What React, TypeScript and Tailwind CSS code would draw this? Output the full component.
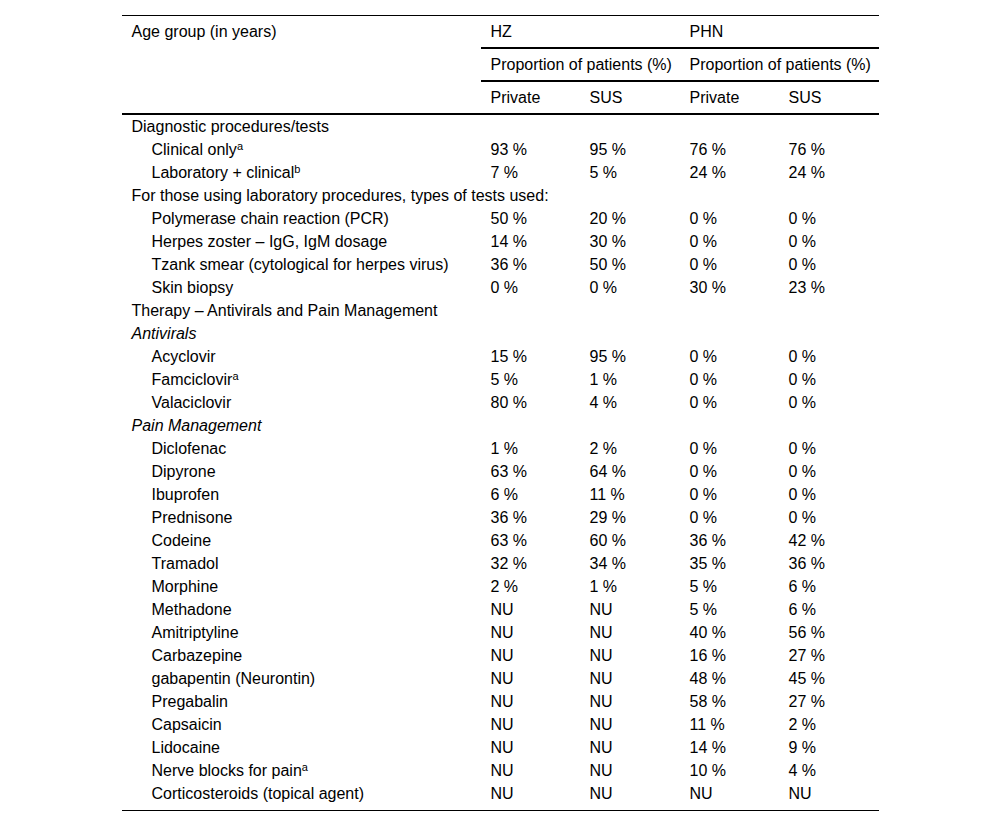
type Row = {
  label: string;
  sup?: string;
  kind: 'section' | 'italic' | 'item';
  values?: string[];
};

const rows: Row[] = [
  { label: 'Diagnostic procedures/tests', kind: 'section' },
  { label: 'Clinical only', sup: 'a', kind: 'item', values: ['93 %', '95 %', '76 %', '76 %'] },
  { label: 'Laboratory + clinical', sup: 'b', kind: 'item', values: ['7 %', '5 %', '24 %', '24 %'] },
  { label: 'For those using laboratory procedures, types of tests used:', kind: 'section' },
  { label: 'Polymerase chain reaction (PCR)', kind: 'item', values: ['50 %', '20 %', '0 %', '0 %'] },
  { label: 'Herpes zoster – IgG, IgM dosage', kind: 'item', values: ['14 %', '30 %', '0 %', '0 %'] },
  { label: 'Tzank smear (cytological for herpes virus)', kind: 'item', values: ['36 %', '50 %', '0 %', '0 %'] },
  { label: 'Skin biopsy', kind: 'item', values: ['0 %', '0 %', '30 %', '23 %'] },
  { label: 'Therapy – Antivirals and Pain Management', kind: 'section' },
  { label: 'Antivirals', kind: 'italic' },
  { label: 'Acyclovir', kind: 'item', values: ['15 %', '95 %', '0 %', '0 %'] },
  { label: 'Famciclovir', sup: 'a', kind: 'item', values: ['5 %', '1 %', '0 %', '0 %'] },
  { label: 'Valaciclovir', kind: 'item', values: ['80 %', '4 %', '0 %', '0 %'] },
  { label: 'Pain Management', kind: 'italic' },
  { label: 'Diclofenac', kind: 'item', values: ['1 %', '2 %', '0 %', '0 %'] },
  { label: 'Dipyrone', kind: 'item', values: ['63 %', '64 %', '0 %', '0 %'] },
  { label: 'Ibuprofen', kind: 'item', values: ['6 %', '11 %', '0 %', '0 %'] },
  { label: 'Prednisone', kind: 'item', values: ['36 %', '29 %', '0 %', '0 %'] },
  { label: 'Codeine', kind: 'item', values: ['63 %', '60 %', '36 %', '42 %'] },
  { label: 'Tramadol', kind: 'item', values: ['32 %', '34 %', '35 %', '36 %'] },
  { label: 'Morphine', kind: 'item', values: ['2 %', '1 %', '5 %', '6 %'] },
  { label: 'Methadone', kind: 'item', values: ['NU', 'NU', '5 %', '6 %'] },
  { label: 'Amitriptyline', kind: 'item', values: ['NU', 'NU', '40 %', '56 %'] },
  { label: 'Carbazepine', kind: 'item', values: ['NU', 'NU', '16 %', '27 %'] },
  { label: 'gabapentin (Neurontin)', kind: 'item', values: ['NU', 'NU', '48 %', '45 %'] },
  { label: 'Pregabalin', kind: 'item', values: ['NU', 'NU', '58 %', '27 %'] },
  { label: 'Capsaicin', kind: 'item', values: ['NU', 'NU', '11 %', '2 %'] },
  { label: 'Lidocaine', kind: 'item', values: ['NU', 'NU', '14 %', '9 %'] },
  { label: 'Nerve blocks for pain', sup: 'a', kind: 'item', values: ['NU', 'NU', '10 %', '4 %'] },
  { label: 'Corticosteroids (topical agent)', kind: 'item', values: ['NU', 'NU', 'NU', 'NU'] },
];

const grid = 'grid grid-cols-[359px_99px_100px_99px_100px]';

export default function App() {
  return (
    <div
      className="min-h-[826px] bg-white pt-[15px] text-[16px] text-black"
      style={{ fontFamily: '"Liberation Sans", Arial, sans-serif' }}
    >
      <div className="mx-auto w-[757px] border-t border-black border-b pb-[5px]">
        {/* header */}
        <div className={`${grid} border-b-2 border-black`}>
          <div className="row-span-3 pl-[10px] leading-[31px]">Age group (in years)</div>
          <div className="col-span-2 border-b-2 border-black pl-[10px] leading-[31px]">HZ</div>
          <div className="col-span-2 border-b-2 border-black pl-[10px] leading-[31px]">PHN</div>
          <div className="col-span-2 border-b-2 border-black pl-[10px] leading-[31px] whitespace-nowrap">
            Proportion of patients (%)
          </div>
          <div className="col-span-2 border-b-2 border-black pl-[10px] leading-[31px] whitespace-nowrap">
            Proportion of patients (%)
          </div>
          <div className="pl-[10px] leading-[31px]">Private</div>
          <div className="pl-[10px] leading-[31px]">SUS</div>
          <div className="pl-[10px] leading-[31px]">Private</div>
          <div className="pl-[10px] leading-[31px]">SUS</div>
        </div>

        {/* body */}
        {rows.map((r, i) => (
          <div key={i} className={`${grid} h-[23px] leading-[23px]`}>
            {r.kind === 'item' ? (
              <>
                <div className="pl-[30px] whitespace-nowrap">
                  {r.label}
                  {r.sup && <sup className="text-[11px] leading-none">{r.sup}</sup>}
                </div>
                {r.values!.map((v, j) => (
                  <div key={j} className="pl-[10px]">
                    {v}
                  </div>
                ))}
              </>
            ) : (
              <div className={`col-span-5 pl-[10px] whitespace-nowrap ${r.kind === 'italic' ? 'italic' : ''}`}>
                {r.label}
              </div>
            )}
          </div>
        ))}
      </div>
    </div>
  );
}
